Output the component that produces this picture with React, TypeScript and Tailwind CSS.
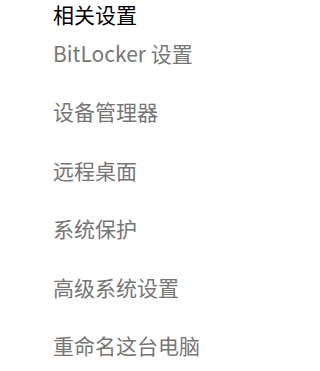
import React from 'react';

const links = ['BitLocker 设置', '设备管理器', '远程桌面', '系统保护', '高级系统设置', '重命名这台电脑'];

const App: React.FC = () => {
  return (
    <div
      className="w-[308px] h-[371px] bg-white pl-[53px] overflow-hidden"
      style={{ fontFamily: '"Segoe UI", "Noto Sans CJK SC", sans-serif' }}
    >
      <h2 className="text-[21px] leading-[28px] text-black font-normal">相关设置</h2>
      <div className="flex flex-col -mt-[4px]">
        {links.map((l) => (
          <a key={l} className="text-[21px] leading-[58.4px] text-[#767676] block">
            {l}
          </a>
        ))}
      </div>
    </div>
  );
};

export default App;
